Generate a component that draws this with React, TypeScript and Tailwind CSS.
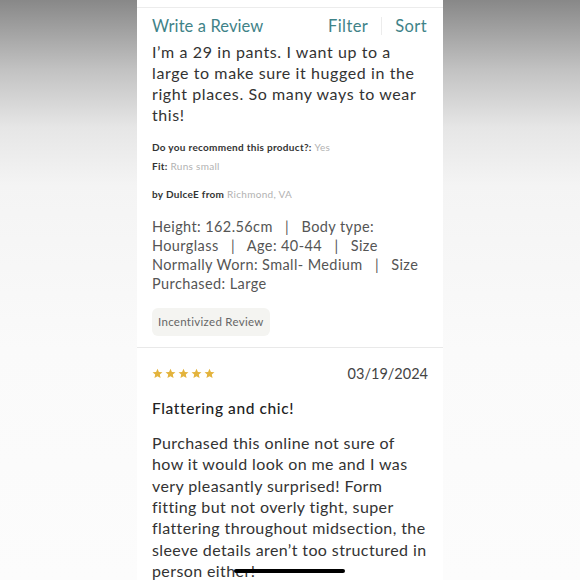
import React from 'react';

const font = { fontFamily: 'Lato, "Noto Sans", sans-serif' };

function Stars() {
  return (
    <div className="flex items-center gap-[2px]">
      {[0, 1, 2, 3, 4].map((i) => (
        <svg key={i} width="11" height="11" viewBox="0 0 24 24" className="fill-[#e3b33c]">
          <path d="M12 1.5l3.1 7.1 7.7.7-5.8 5.1 1.7 7.6L12 18l-6.7 4 1.7-7.6L1.2 9.3l7.7-.7z" />
        </svg>
      ))}
    </div>
  );
}

export default function App() {
  return (
    <div
      className="relative flex h-[580px] w-[580px] items-start justify-center overflow-hidden bg-[linear-gradient(to_bottom,#888888_0%,#c2c2c2_12%,#e6e6e6_22%,#f4f4f4_32%,#fafafa_60%,#fcfcfc_100%)]"
      style={font}
    >
      <div className="w-[306px] shrink-0 bg-white pb-10">
        <div className="h-[8px] border-b border-[#ececec]" />

        <div className="flex items-center justify-between px-[15px] pt-[6px] pb-[2px] text-[16.5px] tracking-[0.1px] text-[#3f8388]">
          <span>Write a Review</span>
          <div className="flex items-center">
            <span className="tracking-[0.4px]">Filter</span>
            <span className="mx-[13px] h-[18px] w-px bg-[#ececec]" />
            <span className="pr-[1px] tracking-[0.4px]">Sort</span>
          </div>
        </div>

        <div className="border-b border-[#e9e9e9] px-[15px] pb-[11px]">
          <p className="text-[16px] leading-[21px] tracking-[0.6px] text-[#333]">
            I’m a 29 in pants. I want up to a large to make sure it hugged in the right places. So many ways to wear this!
          </p>

          <div className="mt-[16px] flex flex-col gap-[6px] text-[10px] leading-[13px] tracking-[0.3px]">
            <p className="font-bold text-[#333]">
              Do you recommend this product?: <span className="font-normal text-[#b2b2b2]">Yes</span>
            </p>
            <p className="font-bold text-[#333]">
              Fit: <span className="font-normal text-[#b2b2b2]">Runs small</span>
            </p>
            <p className="mt-[9px] font-bold text-[#333]">
              by DulceE from <span className="font-normal text-[#b2b2b2]">Richmond, VA</span>
            </p>
          </div>

          <p className="mt-[16px] text-[14.5px] leading-[19px] tracking-[0.4px] text-[#555]">
            Height: 162.56cm&nbsp;&nbsp; | &nbsp;&nbsp;Body type: Hourglass&nbsp;&nbsp; | &nbsp;&nbsp;Age: 40-44&nbsp;&nbsp; | &nbsp;&nbsp;Size Normally Worn: Small- Medium&nbsp;&nbsp; | &nbsp;&nbsp;Size Purchased: Large
          </p>

          <div className="mt-[15px] inline-block rounded-[6px] bg-[#f4f4f1] px-[6px] py-[7px] text-[11.5px] leading-[14px] tracking-[0.3px] text-[#666]">
            Incentivized Review
          </div>
        </div>

        <div className="px-[15px] pt-[15px]">
          <div className="flex items-center justify-between">
            <Stars />
            <span className="text-[14.5px] text-[#444]">03/19/2024</span>
          </div>
          <h2 className="mt-[12px] text-[15.5px] font-medium tracking-[0.6px] text-[#222]">Flattering and chic!</h2>
          <p className="mt-[12px] text-[16px] leading-[21.4px] tracking-[0.4px] text-[#333]">
            Purchased this online not sure of how it would look on me and I was very pleasantly surprised! Form fitting but not overly tight, super flattering throughout midsection, the sleeve details aren’t too structured in person either!
          </p>
        </div>
      </div>

      <div className="absolute left-[234px] top-[569px] h-[4px] w-[111px] rounded-full bg-black" />
    </div>
  );
}
